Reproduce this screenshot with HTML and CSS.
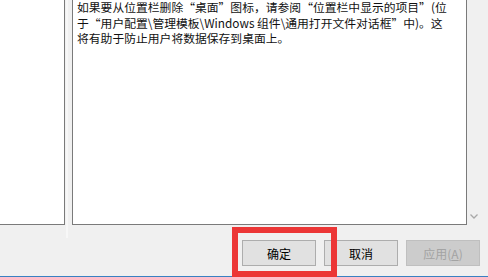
FILE: index.html
```html
<!DOCTYPE html>
<html lang="zh-CN">
<head>
<meta charset="utf-8">
<link rel="stylesheet" href="styles.css">
</head>
<body>
<div class="dialog">
  <div class="top">
    <div class="side"></div>
    <div class="splitter"></div>
    <div class="help">
      <p class="help-text">如果要从位置栏删除“桌面”图标，请参阅“位置栏中显示的项目”(位<br>于“用户配置\管理模板\Windows 组件\通用打开文件对话框”中)。这<br>将有助于防止用户将数据保存到桌面上。</p>
    </div>
    <div class="scroll">
      <svg class="arrow" width="8" height="5" viewBox="0 0 8 5"><path d="M0.5 0.5 L4 4 L7.5 0.5" fill="none" stroke="#a8a8a8" stroke-width="1.3"/></svg>
    </div>
  </div>
  <div class="buttons">
    <button class="btn">确定</button>
    <button class="btn">取消</button>
    <button class="btn disabled">应用(<u>A</u>)</button>
  </div>
  <div class="bottom-line"></div>
  <div class="highlight"></div>
</div>
</body>
</html>
```

FILE: styles.css
```css
html, body {
  margin: 0;
  padding: 0;
}
body {
  background: #f0f0f0;
  width: 488px;
  height: 277px;
  overflow: hidden;
  font-family: "Noto Sans CJK SC", "Noto Sans", sans-serif;
  font-size: 12px;
  color: #000;
}
.dialog {
  position: relative;
  width: 488px;
  height: 277px;
  display: flex;
  flex-direction: column;
}
.top {
  display: flex;
  height: 225px;
}
.side {
  width: 64px;
  background: #fff;
  border-right: 1px solid #7a7a7a;
  border-bottom: 1px solid #7a7a7a;
}
.splitter {
  width: 7px;
  display: flex;
}
.splitter::before {
  content: "";
  width: 2px;
  margin-left: 1px;
  height: 238px;
  background: #f7f7f7;
}
.help {
  background: #fff;
  border-left: 1px solid #7a7a7a;
  border-right: 1px solid #7a7a7a;
  border-bottom: 1px solid #7a7a7a;
  padding: 0 0 0 4px;
  box-sizing: content-box;
  width: 389px;
}
.help-text {
  margin: 0;
  margin-top: -1px;
  line-height: 15.5px;
  font-size: 11.8px;
  white-space: nowrap;
  color: #111;
}
.scroll {
  flex: 1;
  display: flex;
  align-items: flex-end;
  justify-content: flex-start;
  padding-left: 3px;
  padding-bottom: 6px;
}
.arrow {
  display: block;
}
.buttons {
  display: flex;
  justify-content: flex-end;
  gap: 8px;
  padding-right: 8px;
  margin-top: 15px;
}
.btn {
  width: 74px;
  height: 26px;
  background: #e1e1e1;
  border: 1px solid #adadad;
  border-radius: 0;
  padding: 0;
  font-family: "Noto Sans CJK SC", "Noto Sans", sans-serif;
  font-size: 12px;
  color: #000;
}
.btn.disabled {
  background: #cccccc;
  border-color: #bfbfbf;
  color: #a3a3a3;
}
.bottom-line {
  margin-top: auto;
  height: 1px;
  background: #3a80c2;
}
.highlight {
  position: absolute;
  left: 232px;
  top: 227px;
  width: 105px;
  height: 50px;
  box-sizing: border-box;
  border: 6px solid #ec3636;
}
```
